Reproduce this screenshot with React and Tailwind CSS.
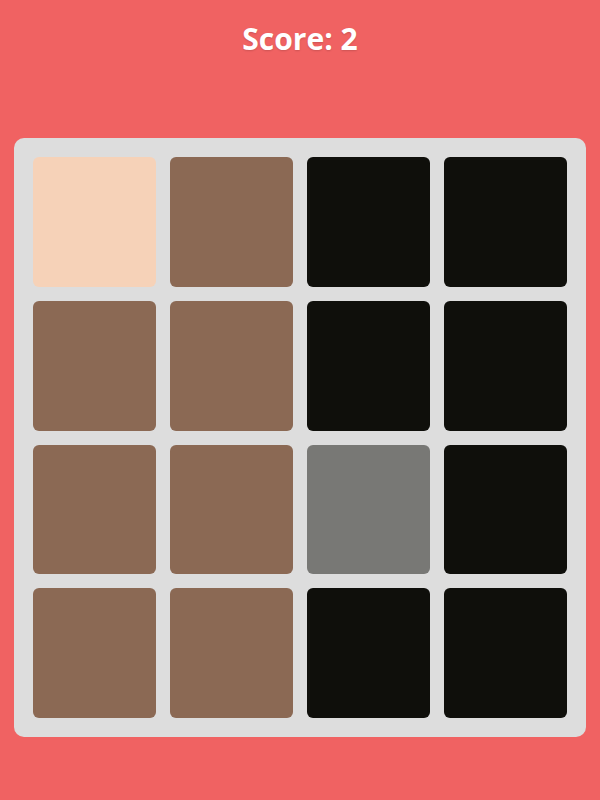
export default function App() {
  const colors = [
    ["#f6d2b8", "#8b6954", "#0f0f0b", "#0f0f0b"],
    ["#8b6954", "#8b6954", "#0f0f0b", "#0f0f0b"],
    ["#8b6954", "#8b6954", "#787875", "#0f0f0b"],
    ["#8b6954", "#8b6954", "#0f0f0b", "#0f0f0b"],
  ];
  return (
    <div className="w-[600px] h-[800px] bg-[#f06262] flex flex-col items-center" style={{ fontFamily: '"Open Sans", "Noto Sans", sans-serif' }}>
      <div className="h-[76px] flex items-center justify-center text-white font-bold text-[30px] [text-shadow:0_1px_2px_rgba(0,0,0,0.15)]">
        Score: 2
      </div>
      <div className="mt-[62px] w-[572px] h-[599px] bg-[#dddddd] rounded-[10px] p-[19px] grid grid-cols-4 grid-rows-4 gap-x-[14px] gap-y-[14px]">
        {colors.flat().map((c, i) => (
          <div key={i} className="rounded-[6px]" style={{ backgroundColor: c }} />
        ))}
      </div>
    </div>
  );
}
